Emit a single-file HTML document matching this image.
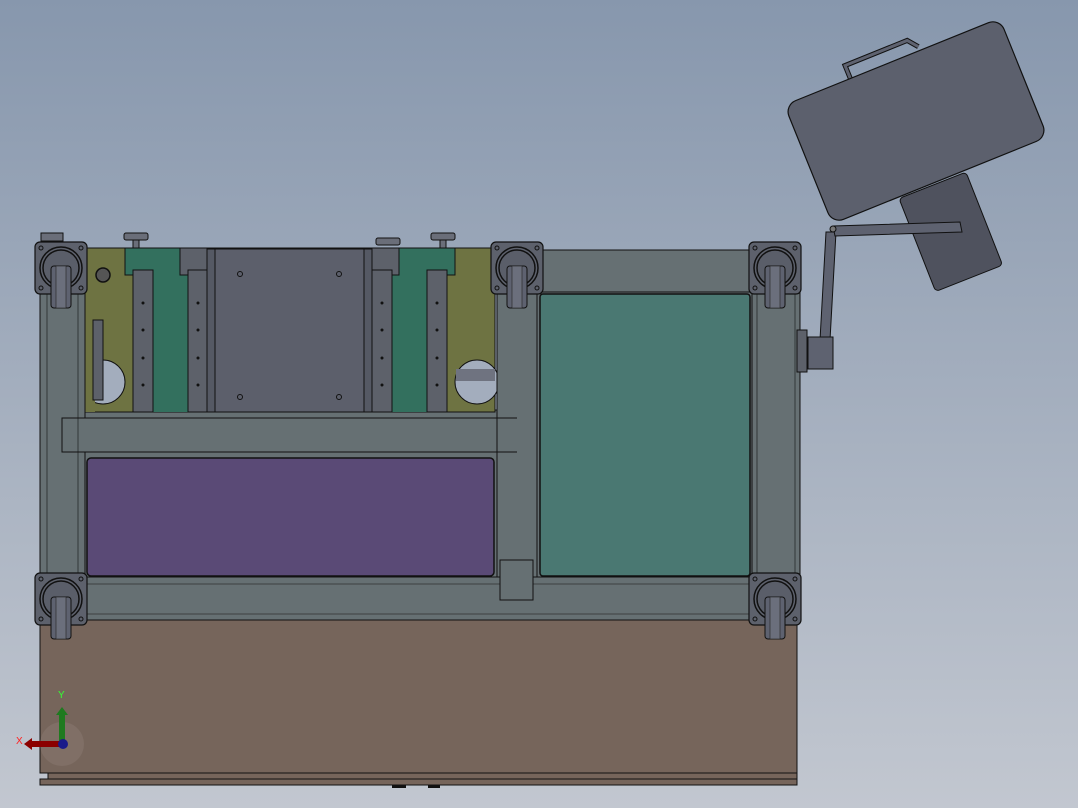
<!DOCTYPE html>
<html><head><style>html,body{margin:0;padding:0;width:1078px;height:808px;overflow:hidden}svg{display:block}</style></head>
<body>
<svg width="1078" height="808" viewBox="0 0 1078 808" xmlns="http://www.w3.org/2000/svg">
<defs>
<linearGradient id="bg" x1="0" y1="0" x2="0" y2="1"><stop offset="0" stop-color="#8797ad"/><stop offset="1" stop-color="#c2c7d0"/></linearGradient>
<g id="caster">
<rect x="-26" y="-26" width="52" height="52" rx="5" fill="#5d616c" stroke="#111" stroke-width="1.2"/>
<circle cx="-20" cy="-20" r="2" fill="none" stroke="#111"/><circle cx="20" cy="-20" r="2" fill="none" stroke="#111"/>
<circle cx="-20" cy="20" r="2" fill="none" stroke="#111"/><circle cx="20" cy="20" r="2" fill="none" stroke="#111"/>
<circle r="21" fill="none" stroke="#111" stroke-width="1.5"/><circle r="18" fill="#5a5e69" stroke="#111" stroke-width="1.5"/>
<rect x="-10" y="-2" width="20" height="42" rx="3" fill="#5e6270" stroke="#111"/>
<rect x="-5" y="-2" width="10" height="42" fill="#6b6f7c" stroke="#222" stroke-width=".6"/>
</g>
</defs>
<rect width="1078" height="808" fill="url(#bg)"/>

<!-- base -->
<rect x="40" y="620" width="757" height="153" fill="#76655b" stroke="#111"/>
<rect x="48" y="773" width="749" height="6" fill="#76655b" stroke="#111"/>
<rect x="40" y="779" width="757" height="6" fill="#76655b" stroke="#111"/>
<rect x="392" y="785" width="14" height="3" fill="#111"/><rect x="428" y="785" width="12" height="3" fill="#111"/>

<!-- top olive section -->
<rect x="85" y="410" width="412" height="10" fill="#667073" stroke="#111"/>
<rect x="85" y="248" width="410" height="164" fill="#6e7342" stroke="#111"/>
<rect x="125" y="248" width="55" height="27" fill="#33705e" stroke="#111"/>
<rect x="153" y="270" width="35" height="142" fill="#33705e"/>
<rect x="399" y="248" width="56" height="27" fill="#33705e" stroke="#111"/>
<rect x="392" y="270" width="35" height="142" fill="#33705e"/>
<rect x="180" y="248" width="28" height="27" fill="#5d616a" stroke="#111"/>
<rect x="372" y="248" width="27" height="27" fill="#5d616a" stroke="#111"/>
<rect x="133" y="270" width="20" height="142" fill="#5d616a" stroke="#111"/>
<rect x="188" y="270" width="20" height="142" fill="#5d616a" stroke="#111"/>
<rect x="372" y="270" width="20" height="142" fill="#5d616a" stroke="#111"/>
<rect x="427" y="270" width="20" height="142" fill="#5d616a" stroke="#111"/>
<rect x="207" y="249" width="8" height="163" fill="#555964" stroke="#111"/>
<rect x="364" y="249" width="8" height="163" fill="#555964" stroke="#111"/>
<rect x="215" y="249" width="149" height="163" fill="#5c5f6b" stroke="#111"/>
<g fill="none" stroke="#111"><circle cx="240" cy="274" r="2.5"/><circle cx="339" cy="274" r="2.5"/><circle cx="240" cy="397" r="2.5"/><circle cx="339" cy="397" r="2.5"/></g>
<g fill="#111"><circle cx="143" cy="303" r="1.5"/><circle cx="143" cy="330" r="1.5"/><circle cx="143" cy="358" r="1.5"/><circle cx="143" cy="385" r="1.5"/>
<circle cx="198" cy="303" r="1.5"/><circle cx="198" cy="330" r="1.5"/><circle cx="198" cy="358" r="1.5"/><circle cx="198" cy="385" r="1.5"/>
<circle cx="382" cy="303" r="1.5"/><circle cx="382" cy="330" r="1.5"/><circle cx="382" cy="358" r="1.5"/><circle cx="382" cy="385" r="1.5"/>
<circle cx="437" cy="303" r="1.5"/><circle cx="437" cy="330" r="1.5"/><circle cx="437" cy="358" r="1.5"/><circle cx="437" cy="385" r="1.5"/></g>
<circle cx="103" cy="382" r="22" fill="#a3adbd" stroke="#111"/>
<circle cx="477" cy="382" r="22" fill="#a3adbd" stroke="#111"/>
<rect x="456" y="369" width="39" height="12" fill="#6f7380"/>
<rect x="85" y="320" width="10" height="92" fill="#6e7342"/>
<rect x="93" y="320" width="10" height="80" fill="#5d616a" stroke="#111"/>
<circle cx="103" cy="275" r="7" fill="#555" stroke="#111" stroke-width="1.5"/>
<!-- knobs -->
<g fill="#6a6e79" stroke="#111"><rect x="124" y="233" width="24" height="7" rx="2"/><rect x="133" y="240" width="6" height="8"/>
<rect x="431" y="233" width="24" height="7" rx="2"/><rect x="440" y="240" width="6" height="8"/>
<rect x="376" y="238" width="24" height="7" rx="2"/><rect x="41" y="233" width="22" height="8"/></g>

<!-- frame -->
<rect x="40" y="250" width="45" height="370" fill="#667073" stroke="#111"/>
<rect x="47" y="250" width="31" height="370" fill="#667073" stroke="#111" stroke-width=".6"/>
<rect x="62" y="418" width="455" height="34" fill="#667073" stroke="#111"/>
<line x1="78" y1="418" x2="78" y2="452" stroke="#111" stroke-width=".6"/>
<rect x="85" y="452" width="412" height="127" fill="#667073" stroke="#111"/>
<rect x="87" y="458" width="407" height="118" rx="4" fill="#5a4a76" stroke="#111" stroke-width="1.5"/>
<rect x="82" y="577" width="718" height="43" fill="#667073" stroke="#111"/>
<rect x="85" y="584" width="715" height="30" fill="#667073" stroke="#222" stroke-width=".6"/>
<rect x="537" y="250" width="215" height="42" fill="#667073" stroke="#111"/>
<rect x="537" y="292" width="215" height="285" fill="#667073" stroke="#111"/>
<rect x="540" y="294" width="210" height="282" rx="3" fill="#4a7872" stroke="#111" stroke-width="1.5"/>
<rect x="497" y="250" width="40" height="327" fill="#667073" stroke="#111"/>
<line x1="497" y1="418" x2="517" y2="418" stroke="#111"/><line x1="497" y1="452" x2="517" y2="452" stroke="#111"/>
<rect x="500" y="560" width="33" height="40" fill="#667073" stroke="#111"/>
<rect x="752" y="250" width="48" height="370" fill="#667073" stroke="#111"/>
<rect x="757" y="250" width="38" height="370" fill="#667073" stroke="#111" stroke-width=".6"/>
<rect x="797" y="330" width="10" height="42" fill="#5d616a" stroke="#111"/>

<use href="#caster" x="61" y="268"/>
<use href="#caster" x="517" y="268"/>
<use href="#caster" x="775" y="268"/>
<use href="#caster" x="61" y="599"/>
<use href="#caster" x="775" y="599"/>

<!-- arm and lamp -->
<polygon points="826,232 836,232 830,340 820,340" fill="#5e6270" stroke="#111"/>
<rect x="808" y="337" width="25" height="32" fill="#5e6270" stroke="#111"/>
<g transform="translate(962,222) rotate(-21.5)">
<rect x="-50" y="-45" width="72" height="100" rx="4" fill="#4f525e" stroke="#111"/>
</g>
<polygon points="833,226 960,222 962,232 835,236" fill="#5e6270" stroke="#111"/>
<circle cx="833" cy="229" r="3" fill="#777" stroke="#111"/>
<g transform="translate(916,121) rotate(-22)">
<path d="M-45 -62 V-78 H22 L30 -68" fill="none" stroke="#111" stroke-width="5"/>
<path d="M-45 -62 V-78 H22 L30 -68" fill="none" stroke="#5e6270" stroke-width="3"/>
<rect x="-116" y="-64" width="232" height="128" rx="12" fill="#5c606d" stroke="#111" stroke-width="1.2"/>
</g>

<!-- axis triad -->
<circle cx="62" cy="744" r="22" fill="#8a7a72" opacity=".5"/>
<rect x="30" y="741" width="32" height="6" fill="#8b0000"/><polygon points="24,744 32,738 32,750" fill="#8b0000"/>
<rect x="59" y="713" width="6" height="31" fill="#1f7a1f"/><polygon points="62,707 56,715 68,715" fill="#1f7a1f"/>
<circle cx="63" cy="744" r="5" fill="#1a1a8a"/>
<text x="58" y="698" font-family="Liberation Sans, sans-serif" font-size="10" fill="#3f3">Y</text>
<text x="16" y="744" font-family="Liberation Sans, sans-serif" font-size="10" fill="#f22">X</text>
</svg>
</body></html>
